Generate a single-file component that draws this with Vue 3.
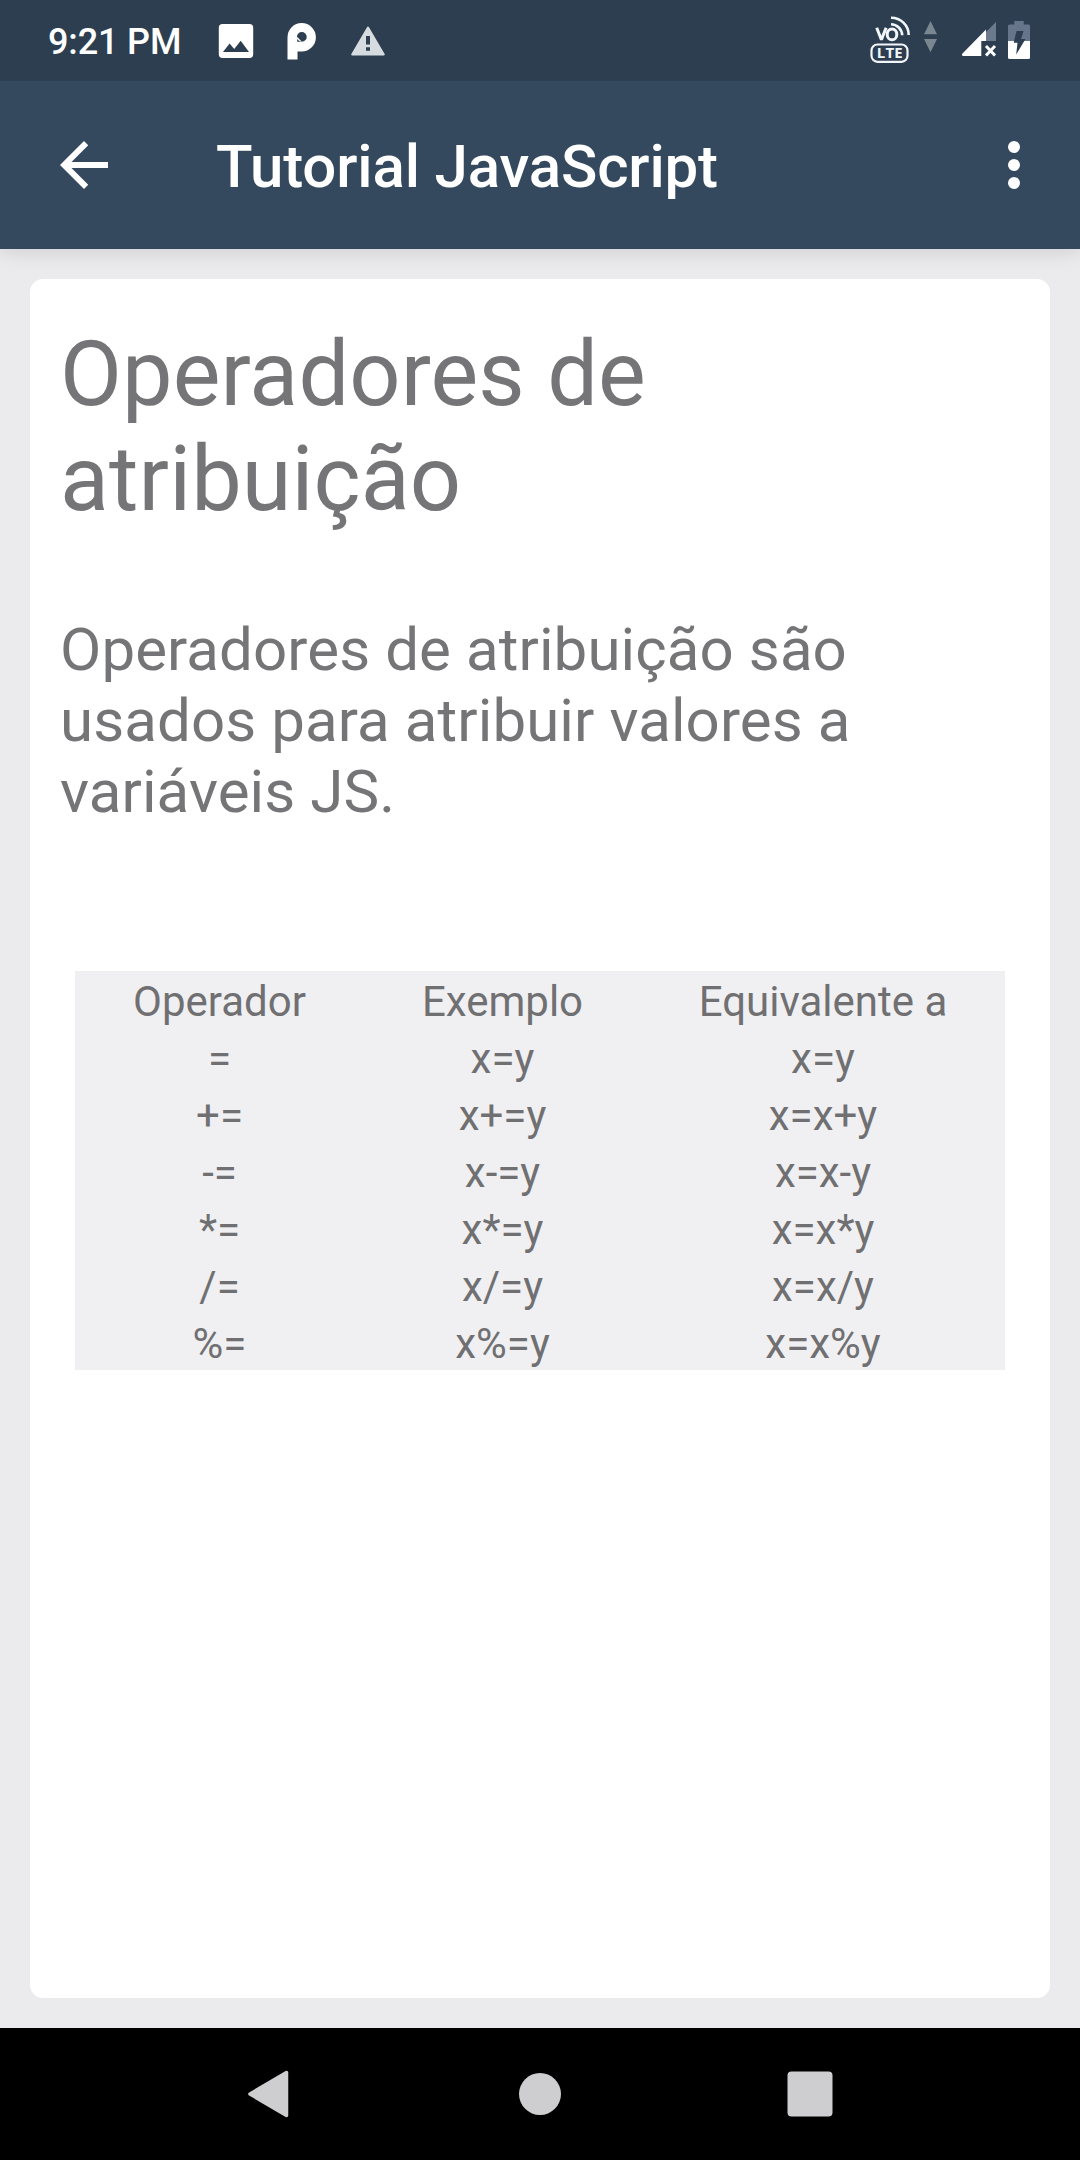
<template>
  <div class="screen">
    <header class="status-bar">
      <span class="clock">9:21 PM</span>
      <svg class="notification-icons" viewBox="210 0 190 81">
        <path fill="#fff" fill-rule="evenodd" d="M222.500 24h27a3.700 3.700 0 0 1 3.700 3.700v26.600a3.700 3.700 0 0 1-3.700 3.700h-27a3.700 3.700 0 0 1-3.700-3.700V27.700a3.700 3.700 0 0 1 3.700-3.700zM223 52h26l-8.300-11.200-6.500 8.300-4.600-5.500z" />
        <path fill="#fff" fill-rule="evenodd" d="M287.500 59.500V37.300a14.200 14.200 0 1 1 14.300 14.200h-4.300v8zM301.800 32a4.900 4.900 0 1 0 0 9.800a4.900 4.900 0 0 0 0-9.800zM297.200 36.800v5h4.600z" />
        <path fill="#d6dbdf" stroke="#d6dbdf" stroke-width="2" stroke-linejoin="round" d="M368 27.500l15.800 27h-31.600z" />
        <path fill="#2c3e50" d="M366 36h4v8.500h-4zM366 47.300h4v3.500h-4z" />
      </svg>
      <div class="spacer"></div>
      <svg class="system-icons" viewBox="860 0 180 81">
        <g fill="none" stroke="#f1f6fa">
          <path stroke-width="3" stroke-linejoin="bevel" d="M876.700 27.800l4.700 12 4.700-12" />
          <ellipse cx="892" cy="34.400" rx="4.800" ry="5.400" stroke-width="3" />
          <path stroke-width="2.600" d="M891 24.200a11.500 11.500 0 0 1 11.200 11M891 17.700a17.500 17.500 0 0 1 17.700 17.300" />
          <rect x="871.500" y="44.500" width="36" height="17.300" rx="6" stroke-width="2.200" />
        </g>
        <text class="lte" x="889.900" y="58.200" text-anchor="middle">LTE</text>
        <path fill="#7b8790" d="M930.500 21l6.500 13.300h-13zM930.500 52.300l6.500-13.300h-13z" />
        <path fill="#6b7a8d" d="M996 22v19h-10V32z" />
        <path fill="#fff" d="M986 29.500V41h-4.700v15H963q-2-.800-.500-2.500z" />
        <path stroke="#fff" stroke-width="3" d="M986 46l9 9.500M995 46l-9 9.500" />
        <path fill="#66758a" d="M1008 41V26q0-1.500 1.500-1.500h4.800V21h9.400v3.500h4.800q1.500 0 1.500 1.500v15z" />
        <path fill="#fff" d="M1008 41h22v16.500q0 1.500-1.500 1.500h-19q-1.500 0-1.500-1.500z" />
        <path fill="#2c3e50" d="M1016.500 31h7l-2.500 8h4.500l-9.300 15.500 1.300-11.800h-3.800z" />
      </svg>
    </header>

    <div class="app-bar">
      <svg class="icon" viewBox="0 0 24 24">
        <path d="M20 11H7.830l5.590-5.590L12 4l-8 8 8 8 1.410-1.410L7.830 13H20v-2z" />
      </svg>
      <h1 class="title">Tutorial JavaScript</h1>
      <svg class="icon" viewBox="0 0 24 24">
        <circle cx="12" cy="6" r="2" />
        <circle cx="12" cy="12" r="2" />
        <circle cx="12" cy="18" r="2" />
      </svg>
    </div>

    <main class="content">
      <article class="card">
        <h2>Operadores de<br />atribuição</h2>
        <p>Operadores de atribuição são<br />usados para atribuir valores a<br />variáveis JS.</p>
        <div class="table">
          <div v-for="row in rows" :key="row[0]" class="row">
            <span v-for="(cell, i) in row" :key="i">{{ cell }}</span>
          </div>
        </div>
      </article>
    </main>

    <nav class="nav-bar">
      <svg viewBox="0 0 48 48">
        <path d="M40.500 2.500v43L4 24z" stroke-width="3.500" stroke-linejoin="round" />
      </svg>
      <svg viewBox="0 0 48 48">
        <circle cx="24" cy="24" r="21" />
      </svg>
      <svg viewBox="0 0 48 48">
        <rect x="1.500" y="1.500" width="45" height="45" rx="4" />
      </svg>
    </nav>
  </div>
</template>

<script setup>
const rows = [
  ['Operador', 'Exemplo', 'Equivalente a'],
  ['=', 'x=y', 'x=y'],
  ['+=', 'x+=y', 'x=x+y'],
  ['-=', 'x-=y', 'x=x-y'],
  ['*=', 'x*=y', 'x=x*y'],
  ['/=', 'x/=y', 'x=x/y'],
  ['%=', 'x%=y', 'x=x%y']
]
</script>

<style>
body {
  margin: 0;
}
</style>

<style scoped>
.screen {
  display: flex;
  flex-direction: column;
  width: 1080px;
  height: 2160px;
  overflow: hidden;
  background: #ebebed;
  font-family: Roboto, sans-serif;
  color: #757577;
}

.status-bar {
  display: flex;
  align-items: center;
  height: 81px;
  flex: none;
  box-sizing: border-box;
  padding: 0 40px 0 48px;
  background: #2c3e50;
  position: relative;
  z-index: 2;
}

.clock {
  width: 162px;
  font-size: 36px;
  font-weight: 500;
  line-height: 81px;
  padding-top: 4px;
  letter-spacing: -0.15px;
  color: #fff;
  white-space: nowrap;
}

.notification-icons {
  width: 190px;
  height: 81px;
}

.spacer {
  flex: 1;
}

.system-icons {
  width: 180px;
  height: 81px;
}

.lte {
  font-family: "Open Sans", sans-serif;
  font-size: 15px;
  font-weight: 700;
  letter-spacing: 0.2px;
  fill: #f1f6fa;
}

.app-bar {
  display: flex;
  align-items: center;
  height: 168px;
  flex: none;
  box-sizing: border-box;
  padding: 0 30px 0 48px;
  background: #34495e;
  box-shadow: 0 2px 20px rgba(0, 0, 0, 0.13);
  position: relative;
  z-index: 1;
}

.icon {
  width: 72px;
  height: 72px;
  fill: #fff;
}

.title {
  flex: 1;
  margin: 0 0 0 96px;
  padding-top: 4px;
  font-size: 60px;
  font-weight: 500;
  line-height: 70px;
  letter-spacing: -0.14px;
  color: #fff;
}

.content {
  display: flex;
  flex: 1;
  padding: 30px;
}

.card {
  flex: 1;
  padding: 43px 30px 0;
  background: #fff;
  border-radius: 13px;
}

h2 {
  margin: 0;
  font-size: 90px;
  font-weight: 400;
  line-height: 105px;
  letter-spacing: 0.1px;
}

p {
  margin: 82px 0 0;
  font-size: 60px;
  line-height: 71px;
  letter-spacing: 0.1px;
}

.table {
  width: 930px;
  margin: 144px 0 0 15px;
  background: #f0f0f2;
  color: #707072;
}

.row {
  display: grid;
  grid-template-columns: 289px 277px 364px;
  height: 57px;
  font-size: 42px;
  line-height: 61px;
  text-align: center;
}

.nav-bar {
  display: flex;
  align-items: center;
  justify-content: center;
  gap: 222px;
  flex: none;
  height: 132px;
  background: #000;
}

.nav-bar svg {
  width: 48px;
  height: 48px;
  fill: #cecdd0;
  stroke: #cecdd0;
  stroke-width: 0;
}
</style>
